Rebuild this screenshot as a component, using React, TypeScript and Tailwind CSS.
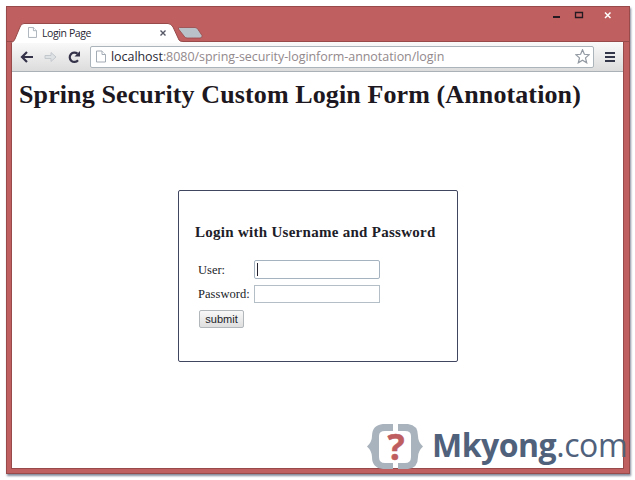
import React from "react";

function PageIcon({ className }: { className: string }) {
  return (
    <svg className={className} viewBox="0 0 10 12" fill="#fff" stroke="#a3abb4" strokeWidth="1">
      <path d="M.5 .5H6L9.5 4V11.5H.5Z" />
      <path d="M6 .5V4H9.5" />
    </svg>
  );
}

function TitleBar() {
  return (
    <div className="relative flex h-[35px] shrink-0 items-end border-b border-[#984a4b]">
      <svg className="absolute left-0 top-0 h-[37px] w-[623px]" viewBox="0 0 623 37">
        <path d="M4 36V35.500Q7 35 8 32L13 20Q14 16.500 17 16.500H161Q164 16.500 166 20L172 33Q173 34.500 176 34.500V36Z" fill="#fff" />
        <path d="M4 35.500Q7 35 8 32L13 20Q14 16.500 17 16.500H161Q164 16.500 166 20L172 33Q173 34.500 176 34.500" fill="none" stroke="#984a4b" strokeWidth="1" />
        <path d="M172.500 20.500H188Q190 20.500 191 22.500L195 28.500Q195.500 31 193 31H180Q178 31 177 29L171.500 22Q171 20.500 172.500 20.500Z" fill="#bac2c9" stroke="#984a4b" strokeWidth=".8" />
        <path d="M546 10H553" stroke="#241a22" strokeWidth="2" />
        <path d="M568.500 5.500H575.500V10.500H568.500ZM568 5.500H576" fill="none" stroke="#241a22" strokeWidth="1.300" />
        <path d="M598 5.500L603.500 11M603.500 5.500L598 11" stroke="#fff" strokeWidth="1.500" />
      </svg>
      <div className="relative ml-[21px] flex h-[18px] w-[142px] items-center">
        <PageIcon className="h-[11px] w-[9px]" />
        <span className="mt-[2px] ml-[5px] font-['Open_Sans',sans-serif] text-[10.5px] leading-none tracking-[-0.4px] whitespace-nowrap text-[#292733]">Login Page</span>
        <svg className="mt-px ml-auto mr-[4px] h-[6px] w-[6px]" viewBox="0 0 6 6" stroke="#555765" strokeWidth="1.400">
          <path d="M.5 .5L5.500 5.500M5.500 .5L.5 5.500" />
        </svg>
      </div>
    </div>
  );
}

function Toolbar() {
  return (
    <div className="flex h-[30px] shrink-0 items-center rounded-t-[2px] border-b border-[#aab2b8] bg-gradient-to-b from-[#fbfafa] to-[#dddcdc] pr-[8px] pl-[8px]">
      <svg className="h-[14px] w-[64px] shrink-0" viewBox="0 0 64 14" fill="none">
        <path d="M13 7H2M7 2L2 7L7 12" stroke="#35334a" strokeWidth="2.200" />
        <path d="M25 5.500H31V2.500L36 7L31 11.500V8.500H25Z" fill="#dfe2e4" stroke="#c3c8cd" />
        <path d="M58 10.300A4.700 4.700 0 1 1 57.500 3.700" stroke="#35334a" strokeWidth="2.200" />
        <path d="M60 1V6.500H54.500Z" fill="#35334a" />
      </svg>
      <div className="ml-[6px] flex h-[22px] w-[504px] items-center rounded-[2px] border border-[#abb4bb] bg-white px-[5px]">
        <PageIcon className="h-[13px] w-[10px]" />
        <span className="mt-[2px] ml-[5px] font-['Open_Sans',sans-serif] text-[12.5px] leading-none tracking-[-0.055px] whitespace-nowrap text-[#92898c]">
          <span className="text-[#292733]">localhost</span>:8080/spring-security-loginform-annotation/login
        </span>
        <svg className="-mr-[2px] ml-auto h-[15px] w-[15px]" viewBox="0 0 15 15" fill="#fff" stroke="#9299a2" strokeWidth="1.200">
          <path d="M7.500 .8L9.400 5.300L14.200 5.700L10.500 8.900L11.700 13.800L7.500 11.200L3.300 13.800L4.500 8.900L.8 5.700L5.600 5.300Z" />
        </svg>
      </div>
      <svg className="ml-auto h-[12px] w-[10px]" viewBox="0 0 10 12" stroke="#333548" strokeWidth="2">
        <path d="M0 2H10M0 6H10M0 10H10" />
      </svg>
    </div>
  );
}

function LoginBox() {
  return (
    <form className="mt-[80px] ml-[166px] flex h-[172px] w-[280px] shrink-0 flex-col rounded-[2px] border border-[#40465f] pl-[16px] text-[#201c28]">
      <h3 className="mt-[32px] text-[15px] leading-[18px] font-bold tracking-[0.28px] whitespace-nowrap">Login with Username and Password</h3>
      <div className="mt-[19px] ml-[3px] grid w-[182px] grid-cols-[56px_126px] gap-y-[6px] text-[12.5px]">
        <label className="leading-[21px] h-[19px]">User:</label>
        <div className="flex h-[19px] items-center rounded-[2px] border border-[#a5b3c0] bg-white pl-[2px]"><span className="h-[13px] w-px bg-[#262331]" /></div>
        <label className="leading-[18px] tracking-[0.05px]">Password:</label>
        <div className="h-[18px] border border-[#b4bec6] bg-white" />
      </div>
      <button type="button" className="mt-[7px] ml-[4px] h-[18px] w-[45px] rounded-[2px] border border-[#b1b7bb] bg-gradient-to-b from-[#f8f8f8] to-[#dfdfdf] font-['Liberation_Sans',sans-serif] text-[11px] leading-none">submit</button>
    </form>
  );
}

function Logo() {
  return (
    <div className="absolute top-[423px] left-[366px] flex h-[48px] w-[264px] items-center whitespace-nowrap text-[#50617c]">
      <svg className="h-[48px] w-[58px] shrink-0" viewBox="0 0 58 48">
        <path d="M27 1H17Q6 2 6 13Q6 19 1 23.500Q6 28 6 34Q6 45 17 46H27V40H19Q13 40 13 34V13Q13 8 19 8H27Z" fill="#a9b3bd" />
        <path d="M32 1H42Q52 2 52 13Q52 19 57 23.500Q52 28 52 34Q52 45 42 46H32V40H39Q45 40 45 34V13Q45 8 39 8H32Z" fill="#a9b3bd" />
        <text x="30" y="37" textAnchor="middle" fontFamily="Open Sans" fontWeight="700" fontSize="36" fill="#bf5e60" stroke="#bf5e60" strokeWidth=".5">?</text>
      </svg>
      <span className="-mt-[4px] ml-[8px] font-['Open_Sans',sans-serif] text-[32px] leading-[44px] font-bold tracking-[-0.5px]">Mkyong<span className="font-normal tracking-[-0.4px]">.com</span></span>
    </div>
  );
}

export default function App() {
  return (
    <div className="relative flex h-[480px] w-[635px] overflow-hidden bg-white pt-[6px] pl-[6px] font-['Liberation_Serif',serif]">
      <div className="flex h-[468px] w-[624px] flex-col border border-[#984a4b] bg-[#bf5f5f] shadow-[1px_2px_2px_#858b9d]">
        <TitleBar />
        <main className="mr-[5px] ml-[4px] flex h-[427px] flex-col border-x border-t-0 border-b border-[#984a4b] bg-white">
          <Toolbar />
          <h1 className="mt-[7px] ml-[7px] h-[31px] shrink-0 text-[26px] leading-[31px] font-bold tracking-[0.11px] whitespace-nowrap text-[#1c1720]">Spring Security Custom Login Form (Annotation)</h1>
          <LoginBox />
        </main>
      </div>
      <Logo />
    </div>
  );
}
